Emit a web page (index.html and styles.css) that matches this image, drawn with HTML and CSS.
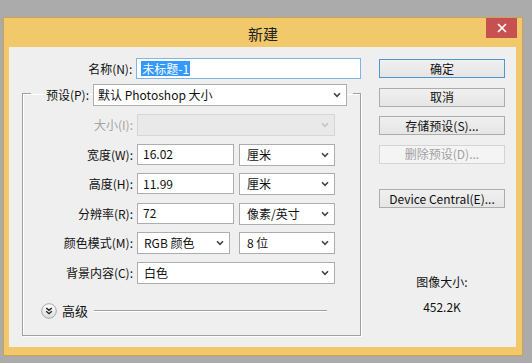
FILE: index.html
```html
<!DOCTYPE html>
<html lang="zh-CN">
<head>
  <meta charset="UTF-8">
  <title>新建</title>
  <link rel="stylesheet" href="styles.css">
</head>
<body>

  <div class="window">
    <div class="titlebar">
      <span></span>
      <div class="title">新建</div>
      <div class="close">
        <svg width="10" height="10" viewBox="0 0 10 10"><path d="M1 1 L9 9 M9 1 L1 9" stroke="#fff" stroke-width="1.7" fill="none"/></svg>
      </div>
    </div>

    <div class="client">
      <div class="main">
        <div class="name-row">
          <span class="lbl name-lbl">名称(N):</span>
          <div class="field name-field"><span class="sel">未标题-1</span></div>
        </div>

        <fieldset class="group">
          <legend class="preset">
            <span class="lbl preset-lbl">预设(P):</span>
            <div class="field select preset-select">
              <span class="val">默认 Photoshop 大小</span>
              <svg class="arrow" width="8" height="6" viewBox="0 0 8 6"><path d="M1 1.2 L4 4.4 L7 1.2" stroke="#444" stroke-width="1.6" fill="none"/></svg>
            </div>
          </legend>

          <div class="rows">
            <div class="row">
              <span class="lbl disabled">大小(I):</span>
              <div class="fields">
                <div class="field select full off">
                  <span class="val"></span>
                  <svg class="arrow" width="8" height="6" viewBox="0 0 8 6"><path d="M1 1.2 L4 4.4 L7 1.2" stroke="#c4c4c4" stroke-width="1.6" fill="none"/></svg>
                </div>
              </div>
            </div>
            <div class="row">
              <span class="lbl">宽度(W):</span>
              <div class="fields">
                <div class="field num"><span class="val">16.02</span></div>
                <div class="field select unit">
                  <span class="val">厘米</span>
                  <svg class="arrow" width="8" height="6" viewBox="0 0 8 6"><path d="M1 1.2 L4 4.4 L7 1.2" stroke="#444" stroke-width="1.6" fill="none"/></svg>
                </div>
              </div>
            </div>
            <div class="row">
              <span class="lbl">高度(H):</span>
              <div class="fields">
                <div class="field num"><span class="val">11.99</span></div>
                <div class="field select unit">
                  <span class="val">厘米</span>
                  <svg class="arrow" width="8" height="6" viewBox="0 0 8 6"><path d="M1 1.2 L4 4.4 L7 1.2" stroke="#444" stroke-width="1.6" fill="none"/></svg>
                </div>
              </div>
            </div>
            <div class="row">
              <span class="lbl">分辨率(R):</span>
              <div class="fields">
                <div class="field num"><span class="val">72</span></div>
                <div class="field select unit">
                  <span class="val">像素/英寸</span>
                  <svg class="arrow" width="8" height="6" viewBox="0 0 8 6"><path d="M1 1.2 L4 4.4 L7 1.2" stroke="#444" stroke-width="1.6" fill="none"/></svg>
                </div>
              </div>
            </div>
            <div class="row">
              <span class="lbl">颜色模式(M):</span>
              <div class="fields">
                <div class="field select mode">
                  <span class="val">RGB 颜色</span>
                  <svg class="arrow" width="8" height="6" viewBox="0 0 8 6"><path d="M1 1.2 L4 4.4 L7 1.2" stroke="#444" stroke-width="1.6" fill="none"/></svg>
                </div>
                <div class="field select unit">
                  <span class="val">8 位</span>
                  <svg class="arrow" width="8" height="6" viewBox="0 0 8 6"><path d="M1 1.2 L4 4.4 L7 1.2" stroke="#444" stroke-width="1.6" fill="none"/></svg>
                </div>
              </div>
            </div>
            <div class="row">
              <span class="lbl">背景内容(C):</span>
              <div class="fields">
                <div class="field select full">
                  <span class="val">白色</span>
                  <svg class="arrow" width="8" height="6" viewBox="0 0 8 6"><path d="M1 1.2 L4 4.4 L7 1.2" stroke="#444" stroke-width="1.6" fill="none"/></svg>
                </div>
              </div>
            </div>
          </div>

          <div class="advanced">
            <svg class="toggle" width="16" height="16" viewBox="0 0 16 16">
              <defs>
                <linearGradient id="knob" x1="0" y1="0" x2="0" y2="1">
                  <stop offset="0" stop-color="#ffffff"/>
                  <stop offset="1" stop-color="#dcdcdc"/>
                </linearGradient>
              </defs>
              <circle cx="8" cy="8" r="7.3" fill="url(#knob)" stroke="#a8a8a8"/>
              <path d="M5.2 5 L8 7.4 L10.8 5 M5.2 8.3 L8 10.7 L10.8 8.3" stroke="#222" stroke-width="1.4" fill="none"/>
            </svg>
            <span class="adv-text">高级</span>
            <span class="adv-line"></span>
          </div>
        </fieldset>
      </div>

      <div class="side">
        <div class="btn default">确定</div>
        <div class="btn">取消</div>
        <div class="btn">存储预设(S)...</div>
        <div class="btn off">删除预设(D)...</div>
        <div class="btn device">Device Central(E)...</div>

        <div class="info">
          <div>图像大小:</div>
          <div>452.2K</div>
        </div>
      </div>
    </div>
  </div>

</body>
</html>
```

FILE: styles.css
```css
body {
  margin: 0;
  background-color: #ababab;
  font-family: "Noto Sans CJK SC", "Noto Sans", sans-serif;
  font-size: 12px;
  color: #111;
}

.window {
  margin: 17px 0 0 3px;
  width: 520px;
  height: 339px;
  box-sizing: border-box;
  border: 1px solid #c9a356;
  background-color: #f1c96a;
  display: flex;
  flex-direction: column;
}

.titlebar {
  height: 29px;
  display: grid;
  grid-template-columns: 1fr auto 1fr;
}

.title {
  align-self: center;
  font-size: 15px;
  line-height: 1;
  color: #222;
  padding-top: 2px;
}

.close {
  justify-self: end;
  width: 31px;
  height: 20px;
  margin-right: 5px;
  background-color: #c75050;
  display: flex;
  align-items: center;
  justify-content: center;
}

.client {
  flex: 1;
  margin: 0 6px 8px 5px;
  background-color: #efefef;
  display: flex;
}

.main {
  width: 352px;
  padding-top: 11px;
}

.lbl {
  text-align: right;
  white-space: nowrap;
  line-height: 1;
}

.lbl.disabled {
  color: #a3a3a3;
}

.name-row {
  display: flex;
  align-items: center;
  gap: 4px;
}

.name-lbl {
  width: 124px;
}

.field {
  box-sizing: border-box;
  height: 22px;
  border: 1px solid #abadb3;
  background-color: #fff;
  display: flex;
  align-items: center;
  padding: 0 5px 0 6px;
  line-height: 1;
  white-space: nowrap;
}

.field .val {
  flex: 1;
}

.name-field {
  width: 226px;
  height: 21px;
  border-color: #7eb4ea;
  padding-left: 4px;
}

.sel {
  background-color: #3399ff;
  color: #fff;
  line-height: 15px;
  padding: 0 1px;
}

.group {
  margin: 5px 0 0 13px;
  padding: 0 0 16px 0;
  width: 339px;
  box-sizing: border-box;
  border: 1px solid #a0a0a0;
  box-shadow: inset 1px 1px 0 #fff, 1px 1px 0 #fff;
  min-inline-size: 0;
}

.preset {
  margin-left: 8px;
  padding: 0 6px 0 0;
  display: flex;
  align-items: flex-start;
  gap: 4px;
}

.preset-lbl {
  width: 58px;
  margin-top: 5px;
}

.preset-select {
  width: 254px;
  margin-bottom: -4px;
  padding-left: 4px;
}

.rows {
  padding-top: 12px;
  display: flex;
  flex-direction: column;
  gap: 7.5px;
}

.row {
  display: flex;
  align-items: center;
  gap: 4px;
}

.row .lbl {
  width: 110px;
}

.fields {
  width: 198px;
  display: flex;
  justify-content: space-between;
}

.full {
  width: 198px;
}

.num {
  width: 97px;
  height: 21px;
  padding-left: 5px;
}

.unit {
  width: 96px;
  padding-left: 7px;
}

.mode {
  width: 93px;
}

.field.off {
  background-color: #e9e9e9;
  border-color: #d6d6d6;
}

.advanced {
  margin-top: 19px;
  padding-left: 18px;
  display: flex;
  align-items: center;
  height: 16px;
}

.toggle {
  display: block;
}

.adv-text {
  margin-left: 5px;
  font-size: 13px;
  line-height: 1;
}

.adv-line {
  margin-left: 6px;
  width: 233px;
  height: 0;
  border-top: 1px solid #a0a0a0;
  border-bottom: 1px solid #fff;
}

.side {
  margin-left: 18px;
  padding-top: 12px;
  width: 126px;
  display: flex;
  flex-direction: column;
  gap: 9.5px;
}

.btn {
  box-sizing: border-box;
  height: 19px;
  border: 1px solid #acacac;
  background: linear-gradient(#f0f0f0, #e5e5e5);
  display: flex;
  align-items: center;
  justify-content: center;
  line-height: 1;
  white-space: nowrap;
}

.btn.default {
  border-color: #4f94d4;
}

.btn.off {
  color: #a0a0a0;
  background: #f4f4f4;
  border-color: #d4d4d4;
}

.btn.device {
  margin-top: 16px;
}

.info {
  margin-top: 56px;
  text-align: center;
  line-height: 16px;
  display: flex;
  flex-direction: column;
  gap: 9px;
}
```
